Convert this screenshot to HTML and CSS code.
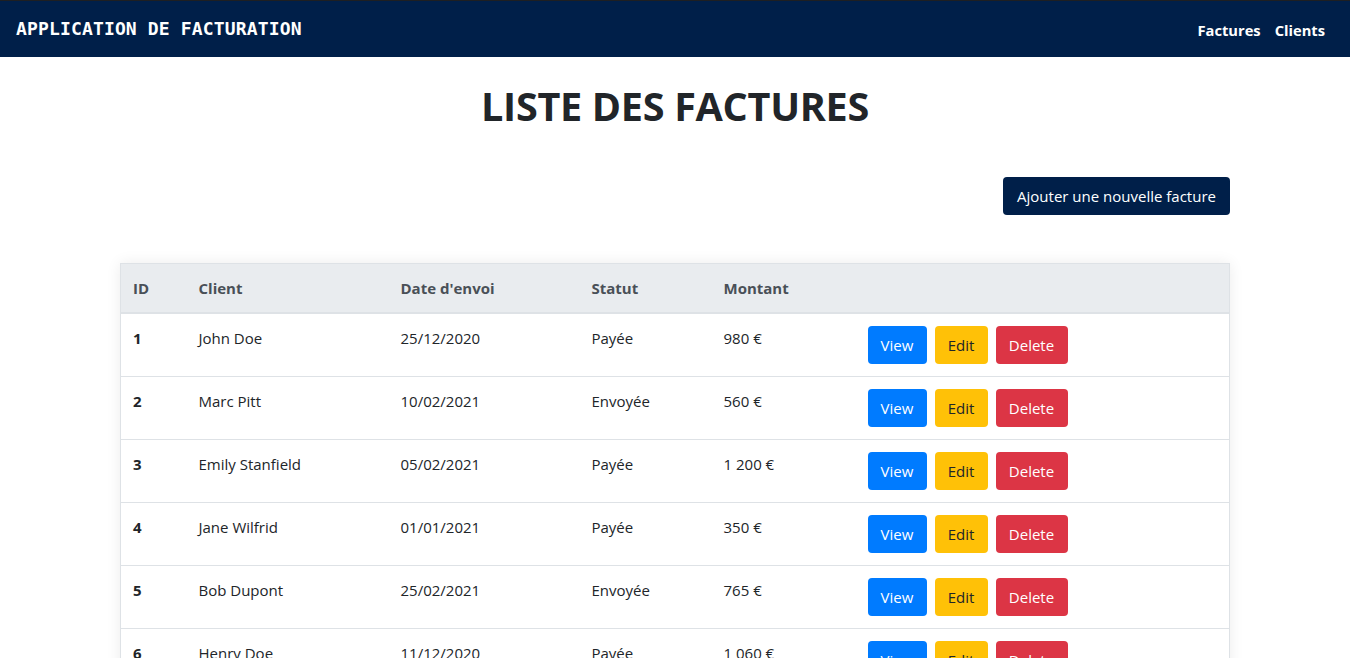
FILE: index.html
```html
<!DOCTYPE html>
<html lang="fr">
<head>
<meta charset="utf-8">
<title>Application de facturation</title>
<link rel="stylesheet" href="styles.css">
</head>
<body>
<nav class="navbar">
  <a class="brand" href="#">APPLICATION DE FACTURATION</a>
  <div class="nav-links">
    <a href="#">Factures</a>
    <a href="#">Clients</a>
  </div>
</nav>
<main class="container">
  <h1 class="title">LISTE DES FACTURES</h1>
  <div class="actions-bar">
    <button class="btn btn-primary-dark">Ajouter une nouvelle facture</button>
  </div>
  <table class="table">
    <thead>
      <tr>
        <th class="c-id">ID</th>
        <th class="c-client">Client</th>
        <th class="c-date">Date d'envoi</th>
        <th class="c-status">Statut</th>
        <th class="c-amount">Montant</th>
        <th></th>
      </tr>
    </thead>
    <tbody>
      <tr><td class="id">1</td><td>John Doe</td><td>25/12/2020</td><td>Payée</td><td>980 €</td><td class="btns"><button class="btn btn-blue">View</button><button class="btn btn-yellow">Edit</button><button class="btn btn-red">Delete</button></td></tr>
      <tr><td class="id">2</td><td>Marc Pitt</td><td>10/02/2021</td><td>Envoyée</td><td>560 €</td><td class="btns"><button class="btn btn-blue">View</button><button class="btn btn-yellow">Edit</button><button class="btn btn-red">Delete</button></td></tr>
      <tr><td class="id">3</td><td>Emily Stanfield</td><td>05/02/2021</td><td>Payée</td><td>1 200 €</td><td class="btns"><button class="btn btn-blue">View</button><button class="btn btn-yellow">Edit</button><button class="btn btn-red">Delete</button></td></tr>
      <tr><td class="id">4</td><td>Jane Wilfrid</td><td>01/01/2021</td><td>Payée</td><td>350 €</td><td class="btns"><button class="btn btn-blue">View</button><button class="btn btn-yellow">Edit</button><button class="btn btn-red">Delete</button></td></tr>
      <tr><td class="id">5</td><td>Bob Dupont</td><td>25/02/2021</td><td>Envoyée</td><td>765 €</td><td class="btns"><button class="btn btn-blue">View</button><button class="btn btn-yellow">Edit</button><button class="btn btn-red">Delete</button></td></tr>
      <tr><td class="id">6</td><td>Henry Doe</td><td>11/12/2020</td><td>Payée</td><td>1 060 €</td><td class="btns"><button class="btn btn-blue">View</button><button class="btn btn-yellow">Edit</button><button class="btn btn-red">Delete</button></td></tr>
    </tbody>
  </table>
</main>
</body>
</html>
```

FILE: styles.css
```css
* { box-sizing: border-box; }
html, body { margin: 0; padding: 0; }
body {
  font-family: "Open Sans", "Noto Sans", sans-serif;
  font-size: 15px;
  line-height: 24px;
  color: #212529;
  background: #fff;
}
.navbar {
  height: 57px;
  background: #001f49;
  border-top: 1px solid #1e1f22;
  display: flex;
  align-items: center;
  justify-content: space-between;
  padding: 0 25px 0 16px;
}
.brand {
  font-family: "DejaVu Sans Mono", "Liberation Mono", monospace;
  font-weight: bold;
  font-size: 18px;
  letter-spacing: 0.15px;
  color: #fff;
  text-decoration: none;
  margin-top: -1px;
}
.nav-links { display: flex; gap: 14px; margin-top: 1px; }
.nav-links a {
  color: #fff;
  font-weight: 700;
  font-size: 14.7px;
  text-decoration: none;
}
.container {
  width: 1110px;
  margin: 0 auto;
}
.title {
  margin: 25px 0 0;
  text-align: center;
  font-size: 39.6px;
  line-height: 48px;
  font-weight: 700;
  letter-spacing: -0.3px;
}
.actions-bar {
  display: flex;
  justify-content: flex-end;
  margin-top: 47px;
  margin-bottom: 48px;
}
.btn {
  border: 0;
  border-radius: 4px;
  font-family: inherit;
  font-size: 15px;
  line-height: 24px;
  padding: 7px 12px;
  height: 38px;
  cursor: pointer;
}
.btn-primary-dark {
  background: #001f49;
  color: #fff;
  padding: 7px 13px;
  width: 227px;
}
.table {
  width: 1110px;
  border-collapse: collapse;
  border: 1px solid #dee2e6;
  box-shadow: 0 0 14px rgba(0,0,0,0.08);
  background: #fff;
}
.table th {
  background: #e9ecef;
  color: #495057;
  text-align: left;
  font-weight: 700;
  padding: 12px;
  border-bottom: 2px solid #dee2e6;
}
.table td {
  padding: 12px;
  vertical-align: top;
  border-top: 1px solid #dee2e6;
}
.c-id { width: 66px; }
.c-client { width: 202px; }
.c-date { width: 191px; }
.c-status { width: 132px; }
.c-amount { width: 144px; }
.id { font-weight: 700; }
.btns .btn { margin-right: 8px; }
.btn-blue { background: #007bff; color: #fff; width: 59px; }
.btn-yellow { background: #ffc107; color: #212529; width: 53px; }
.btn-red { background: #dc3545; color: #fff; width: 72px; }
```
